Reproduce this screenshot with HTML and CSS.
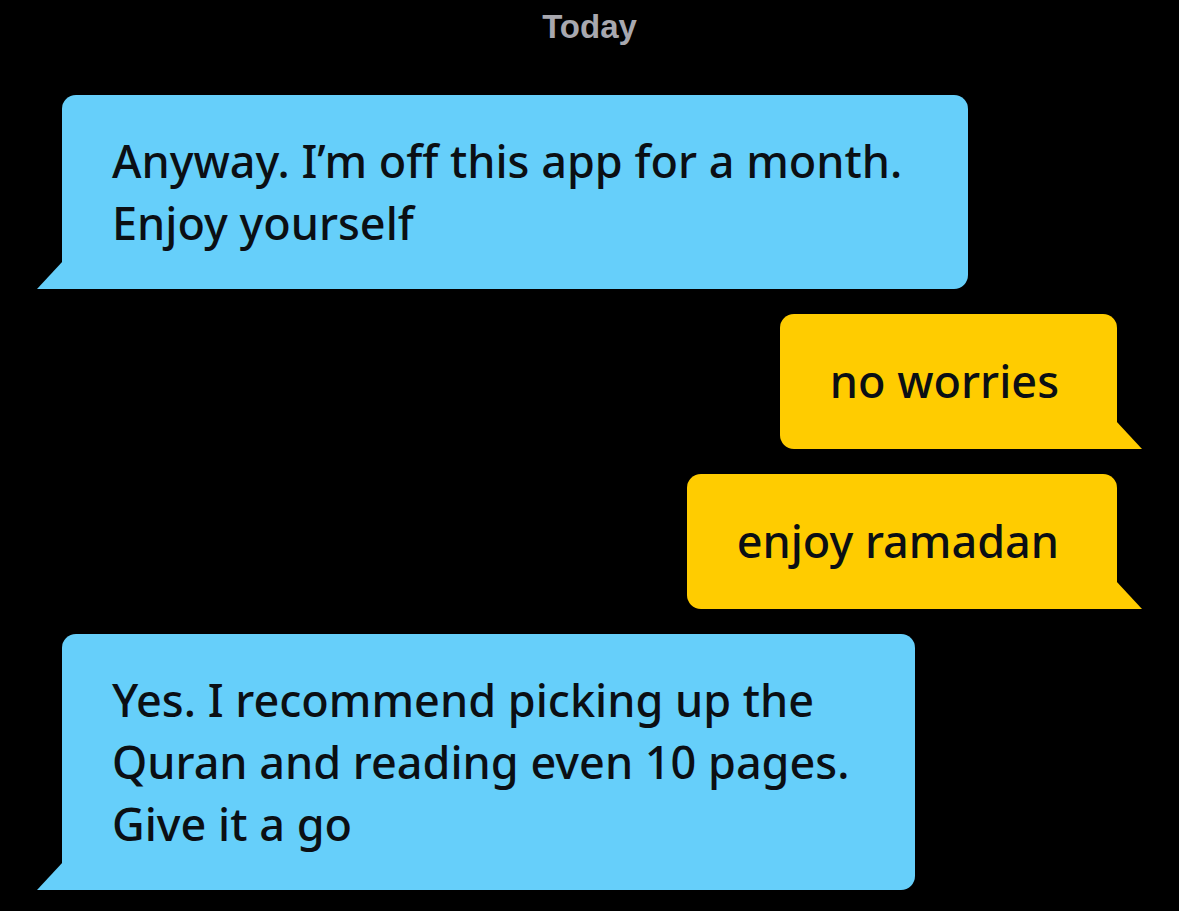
FILE: index.html
```html
<html lang="en">
<head>
  <meta charset="UTF-8" />
  <title>Chat</title>
  <link rel="stylesheet" href="styles.css">
</head>
<body>
  <div class="chat">
    <div class="day">Today</div>

    <div class="msg received">
      Anyway. I’m off this app for a month.<br>Enjoy yourself
    </div>

    <div class="msg sent">no worries</div>

    <div class="msg sent">enjoy ramadan</div>

    <div class="msg received">
      Yes. I recommend picking up the<br>Quran and reading even 10 pages.<br>Give it a go
    </div>
  </div>
</body>
</html>
```

FILE: styles.css
```css
* {
  margin: 0;
  padding: 0;
  box-sizing: border-box;
}

body {
  background: #000;
  color: #0b0f14;
  font-family: 'Noto Sans', 'Open Sans', sans-serif;
  height: 911px;
  overflow: hidden;
}

.chat {
  display: flex;
  flex-direction: column;
  gap: 25px;
  padding: 0 62px;
}

.day {
  align-self: center;
  color: #a8a8af;
  font-family: 'Liberation Sans', Arial, sans-serif;
  font-weight: bold;
  font-size: 33px;
  line-height: 54px;
  margin-bottom: 16px;
}

.msg {
  position: relative;
  font-size: 45px;
  font-weight: 500;
  line-height: 62px;
  padding: 35px 58px 35px 50px;
  border-radius: 14px;
  white-space: nowrap;
}

.msg::after {
  content: '';
  position: absolute;
  bottom: 0;
  width: 26px;
  height: 28px;
}

.received {
  align-self: flex-start;
  background: #66cffa;
  border-bottom-left-radius: 0;
  padding-right: 66px;
}

.received::after {
  left: -25px;
  background: #66cffa;
  clip-path: polygon(100% 0, 100% 100%, 0 100%);
}

.sent {
  align-self: flex-end;
  background: #ffcc00;
  border-bottom-right-radius: 0;
  padding-top: 36px;
  padding-bottom: 37px;
}

.sent::after {
  right: -25px;
  background: #ffcc00;
  clip-path: polygon(0 0, 100% 100%, 0 100%);
}
```
